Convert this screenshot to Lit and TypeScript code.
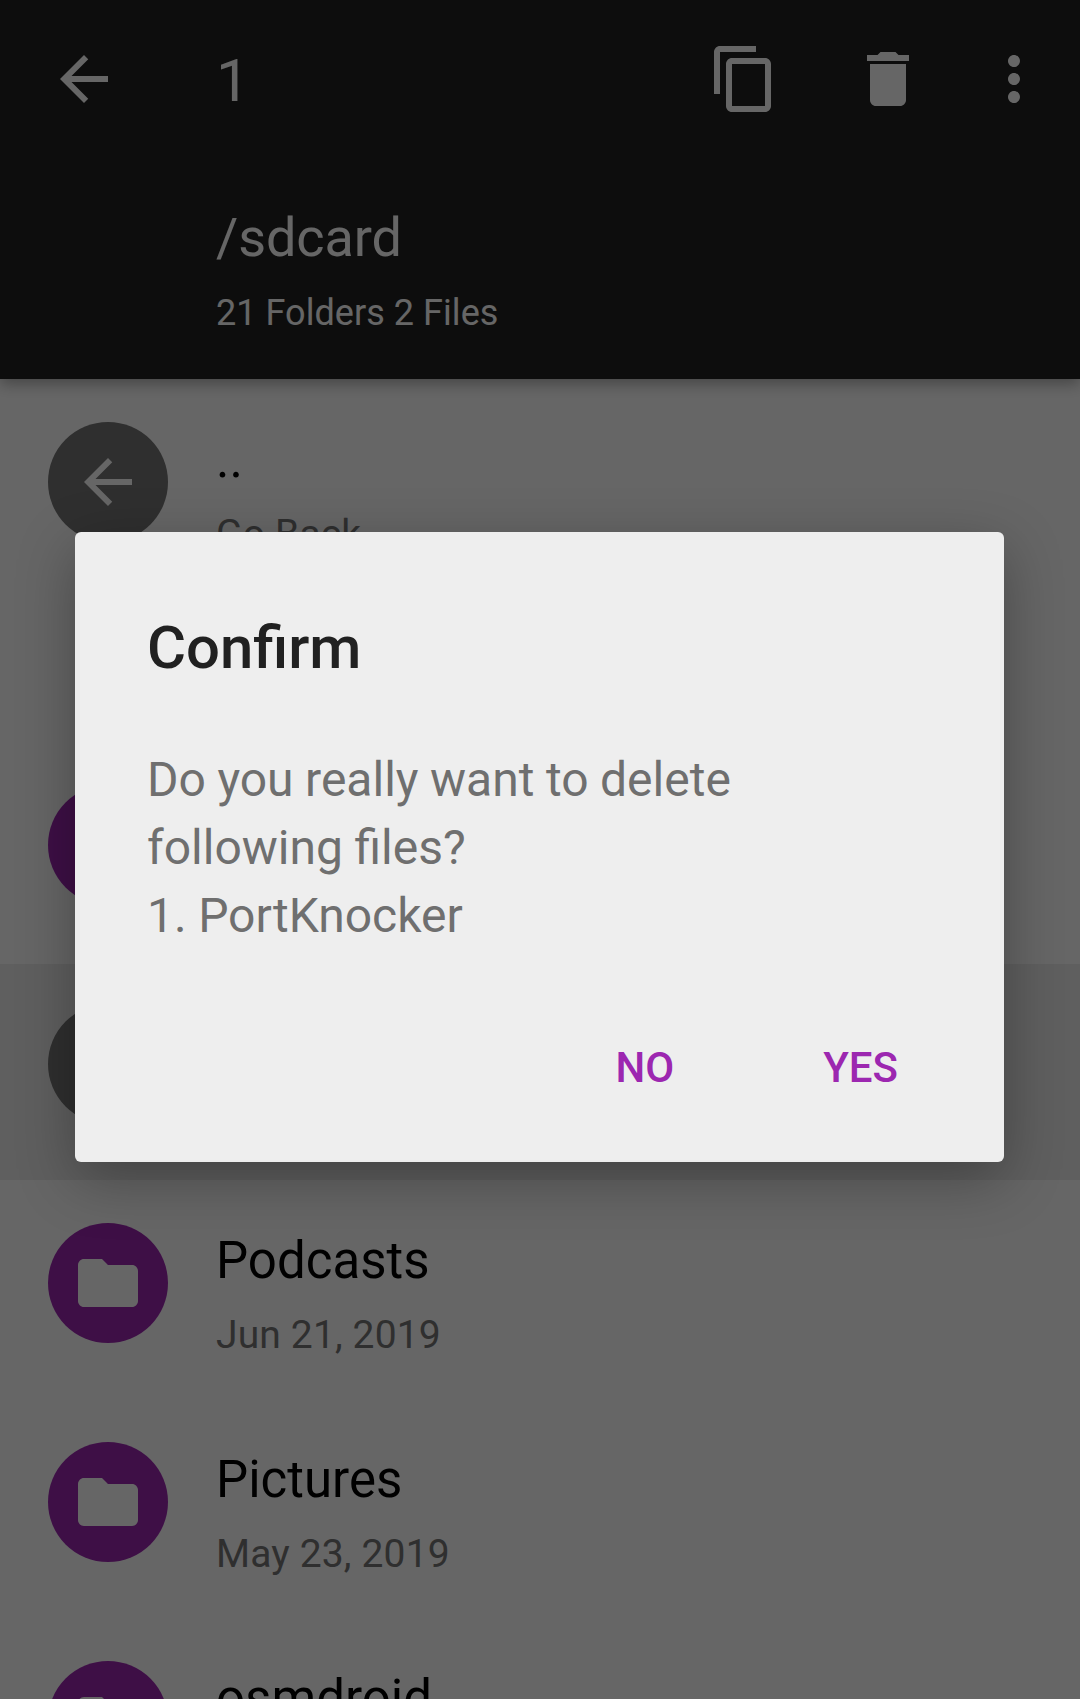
import { LitElement, html, css, svg } from "lit";
import { customElement, property } from "lit/decorators.js";
import { classMap } from "lit/directives/class-map.js";

const ICONS: Record<string, string> = {
  back: "M20 11H7.83l5.59-5.59L12 4l-8 8 8 8 1.41-1.41L7.83 13H20v-2z",
  copy: "M16 1H4c-1.1 0-2 .9-2 2v14h2V3h12V1zm3 4H8c-1.1 0-2 .9-2 2v14c0 1.1.9 2 2 2h11c1.1 0 2-.9 2-2V7c0-1.1-.9-2-2-2zm0 16H8V7h11v14z",
  trash: "M6 19c0 1.1.9 2 2 2h8c1.1 0 2-.9 2-2V7H6v12zM19 4h-3.5l-1-1h-5l-1 1H5v2h14V4z",
  more: "M12 8c1.1 0 2-.9 2-2s-.9-2-2-2-2 .9-2 2 .9 2 2 2zm0 2c-1.1 0-2 .9-2 2s.9 2 2 2 2-.9 2-2-.9-2-2-2zm0 6c-1.1 0-2 .9-2 2s.9 2 2 2 2-.9 2-2-.9-2-2-2z",
  folder: "M10 4H4c-1.1 0-1.99.9-1.99 2L2 18c0 1.1.9 2 2 2h16c1.1 0 2-.9 2-2V8c0-1.1-.9-2-2-2h-8l-2-2z",
  check: "M9 16.17L4.83 12l-1.42 1.41L9 19 21 7l-1.41-1.41z",
};

@customElement("app-icon")
export class AppIcon extends LitElement {
  @property() name = "folder";

  static styles = css`
    :host { display: block; width: 72px; height: 72px; }
    .glyph { display: block; width: 100%; height: 100%; fill: currentColor; }
  `;

  render() {
    return html`<svg class="glyph" viewBox="0 0 24 24">${svg`<path d=${ICONS[this.name]}></path>`}</svg>`;
  }
}

@customElement("file-row")
export class FileRow extends LitElement {
  @property() icon = "folder";
  @property() name = "";
  @property() detail = "";
  @property({ type: Boolean }) muted = false;
  @property({ type: Boolean }) selected = false;

  static styles = css`
    :host { display: block; }
    .row { display: flex; height: 216px; padding-left: 48px; box-sizing: border-box; }
    .selected { background: #eeeeee; }
    .avatar {
      width: 120px; height: 120px; margin-top: 40px; border-radius: 50%;
      display: grid; place-items: center; background: #9c27b0; color: #fff; flex: none;
    }
    .muted { background: #757575; }
    .text { margin-left: 48px; padding-top: 48px; }
    .name { font-size: 51px; line-height: 60px; color: #000; white-space: pre; }
    .detail { font-size: 39px; line-height: 46px; margin-top: 21px; letter-spacing: 0.15px; color: #757575; white-space: pre; }
  `;

  render() {
    return html`
      <div class=${classMap({ row: true, selected: this.selected })}>
        <div class=${classMap({ avatar: true, muted: this.muted })}>
          <app-icon name=${this.icon}></app-icon>
        </div>
        <div class="text">
          <div class="name">${this.name}</div>
          <div class="detail">${this.detail}</div>
        </div>
      </div>
    `;
  }
}

interface Entry { icon: string; name: string; detail: string; muted?: boolean; selected?: boolean }

const FOLDERS: Entry[] = [
  { icon: "folder", name: "", detail: "" },
  { icon: "check", name: "PortKnocker", detail: "", muted: true, selected: true },
  { icon: "folder", name: "Podcasts", detail: "Jun 21, 2019" },
  { icon: "folder", name: "Pictures", detail: "May 23, 2019" },
  { icon: "folder", name: "osmdroid", detail: "" },
];

@customElement("app-root")
export class AppRoot extends LitElement {
  static styles = css`
    :host {
      display: block; position: relative; width: 1080px; height: 1699px;
      overflow: hidden; background: #fff; font-family: Roboto, sans-serif;
    }
    .header {
      position: relative; height: 379px; background: #212121; color: #fff;
      box-shadow: 0 5px 14px rgba(0, 0, 0, 0.32);
    }
    .bar { display: flex; align-items: center; height: 158px; padding: 0 30px 0 48px; box-sizing: border-box; }
    .count { font-size: 60px; line-height: 70px; padding-top: 4px; margin-left: 96px; flex: 1; }
    .actions { display: flex; }
    .copy { margin-right: 72px; }
    .trash { margin-right: 54px; }
    .location { padding: 48px 0 0 216px; }
    .path { font-size: 54px; line-height: 64px; letter-spacing: -0.1px; }
    .stats { font-size: 36px; line-height: 42px; margin-top: 22px; letter-spacing: 0.05px; }
    .list { padding-top: 3px; }
    .folders { display: flex; flex-direction: column; gap: 3px; margin-top: 147px; }
    .scrim {
      position: absolute; inset: 0; display: flex; flex-direction: column; align-items: flex-start;
      padding: 532px 0 0 75px; box-sizing: border-box; background: rgba(0, 0, 0, 0.6);
    }
    .dialog {
      width: 929px; height: 630px; box-sizing: border-box; padding: 81px 72px 0;
      border-radius: 6px; background: #eeeeee; box-shadow: 0 17px 58px rgba(0, 0, 0, 0.31);
    }
    .title { font-size: 59.8px; font-weight: 500; line-height: 70px; color: #212121; }
    .message { font-size: 48px; line-height: 68px; margin-top: 63px; word-spacing: -0.4px; color: #6f6f6f; white-space: pre-line; }
    .buttons { display: flex; justify-content: flex-end; gap: 149px; margin-top: 93px; padding-right: 34px; }
    .button {
      font: 500 42px/50px Roboto, sans-serif; color: #9c27b0; background: none; border: 0; padding: 0;
    }
  `;

  render() {
    return html`
      <header class="header">
        <div class="bar">
          <app-icon name="back"></app-icon>
          <div class="count">1</div>
          <div class="actions">
            <app-icon class="copy" name="copy"></app-icon>
            <app-icon class="trash" name="trash"></app-icon>
            <app-icon name="more"></app-icon>
          </div>
        </div>
        <div class="location">
          <div class="path">/sdcard</div>
          <div class="stats">21 Folders 2 Files</div>
        </div>
      </header>
      <main class="list">
        <file-row icon="back" name=".." detail="Go Back" muted></file-row>
        <div class="folders">
          ${FOLDERS.map((f) => html`
            <file-row .icon=${f.icon} .name=${f.name} .detail=${f.detail}
              .muted=${!!f.muted} .selected=${!!f.selected}></file-row>`)}
        </div>
      </main>
      <div class="scrim">
        <section class="dialog" role="dialog">
          <div class="title">Confirm</div>
          <div class="message">${"Do you really want to delete\nfollowing files?\n1. PortKnocker"}</div>
          <div class="buttons">
            <button class="button">NO</button>
            <button class="button">YES</button>
          </div>
        </section>
      </div>
    `;
  }
}
